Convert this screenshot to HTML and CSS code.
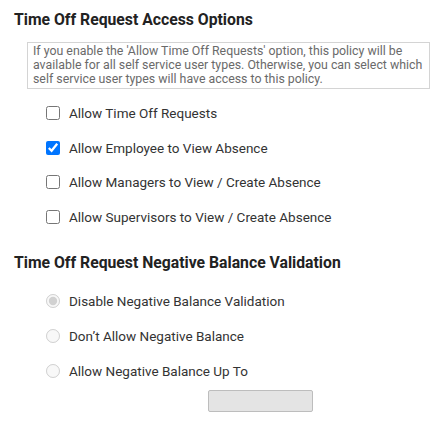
FILE: index.html
```html
<!DOCTYPE html>
<html>
<head>
<meta charset="utf-8">
<link rel="stylesheet" href="styles.css">
</head>
<body>
<div class="section">
  <h2 class="title">Time Off Request Access Options</h2>
  <div class="note">If you enable the 'Allow Time Off Requests' option, this policy will be available for all self service user types. Otherwise, you can select which self service user types will have access to this policy.</div>
  <div class="options checks">
    <label class="row"><input type="checkbox" class="box"><span>Allow Time Off Requests</span></label>
    <label class="row"><input type="checkbox" class="box" checked><span>Allow Employee to View Absence</span></label>
    <label class="row"><input type="checkbox" class="box"><span>Allow Managers to View / Create Absence</span></label>
    <label class="row"><input type="checkbox" class="box"><span>Allow Supervisors to View / Create Absence</span></label>
  </div>
  <h2 class="title second">Time Off Request Negative Balance Validation</h2>
  <div class="options radios">
    <label class="row"><input type="radio" name="neg" class="radio" checked disabled><span>Disable Negative Balance Validation</span></label>
    <label class="row"><input type="radio" name="neg" class="radio" disabled><span>Don’t Allow Negative Balance</span></label>
    <label class="row"><input type="radio" name="neg" class="radio" disabled><span>Allow Negative Balance Up To</span></label>
  </div>
  <input type="text" class="amount" disabled>
</div>
</body>
</html>
```
FILE: styles.css
```css
html, body {
  margin: 0;
  padding: 0;
  background: #fff;
}
body {
  font-family: Roboto, "Liberation Sans", sans-serif;
  color: #333;
}
.section {
  padding-left: 14px;
  display: flex;
  flex-direction: column;
  align-items: flex-start;
}
.title {
  margin: 10px 0 0;
  font-size: 15.75px;
  line-height: 20px;
  font-weight: 700;
  color: #222;
}
.title.second {
  margin-top: 19px;
}
.note {
  margin: 12px 0 0 13px;
  width: 392px;
  padding: 1px 4px 2px 5px;
  border: 1px solid #d4d4d4;
  font-size: 12.35px;
  line-height: 14px;
  color: #6a6a6a;
}
.options {
  display: flex;
  flex-direction: column;
  margin-left: 32px;
}
.checks {
  margin-top: 7px;
}
.checks .row {
  height: 34.5px;
}
.radios {
  margin-top: 10.5px;
}
.radios .row {
  height: 35px;
}
.row {
  display: flex;
  align-items: center;
  gap: 9px;
  font-size: 13.5px;
  color: #333;
}
.box, .radio {
  width: 14px;
  height: 14px;
  margin: 0;
}
.amount {
  margin: 1.5px 0 0 194px;
  width: 105px;
  height: 22px;
  box-sizing: border-box;
  background: #e4e4e4;
  border: 1px solid #bdbdbd;
  border-radius: 2px;
}
```
